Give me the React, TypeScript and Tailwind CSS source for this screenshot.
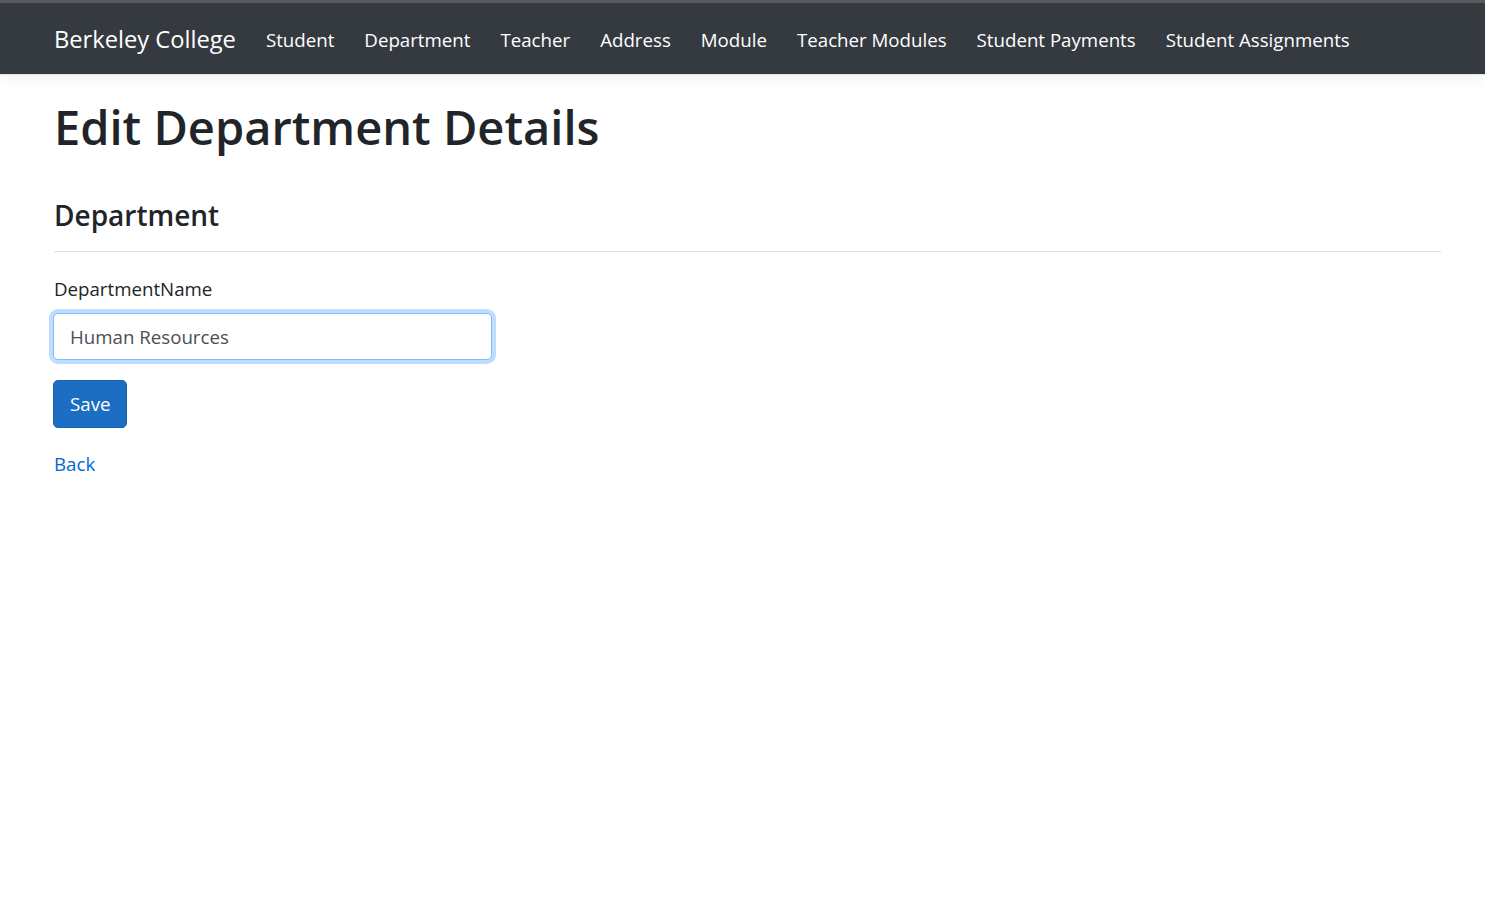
import { FC, useState } from 'react';

const navLinks = [
  'Student',
  'Department',
  'Teacher',
  'Address',
  'Module',
  'Teacher Modules',
  'Student Payments',
  'Student Assignments'
];

const App: FC = () => {
  const [name, setName] = useState('Human Resources');

  return (
    <div className="min-h-screen bg-white text-[#212529] font-['Open_Sans',sans-serif]">
      {/* Top strip + navbar */}
      <div className="h-[3px] bg-[#5b5b5b]" />
      <header className="h-[72px] bg-[#343a40] border-b border-[#e3e5e8] shadow-[0_4px_16px_rgba(0,0,0,0.05)]">
        <nav className="h-full flex items-center pl-[54px] pt-[5px]">
          <a href="#" className="text-[23.7px] text-white mr-[30px] leading-none pb-[2px]">Berkeley College</a>
          <ul className="flex items-center gap-[30px]">
            {navLinks.map((link) => (
              <li key={link}>
                <a href="#" className="text-[18.7px] text-white leading-none">{link}</a>
              </li>
            ))}
          </ul>
        </nav>
      </header>

      <main className="pl-[54px] pr-[44px]">
        <h1 className="text-[47px] font-semibold leading-[1.2] mt-[24px] mb-[44px]">Edit Department Details</h1>

        <h4 className="text-[28px] font-semibold leading-[1.2]">Department</h4>
        <hr className="mt-[18px] mb-[23px] border-t border-[#e0e0e0]" />

        {/* Form */}
        <div className="w-[439px] -ml-[1px]">
          <label className="block text-[18.7px] mb-[10px] leading-[1.5] ml-[1px]">DepartmentName</label>
          <input
            value={name}
            onChange={(e) => setName(e.target.value)}
            className="block w-full h-[47px] px-[16px] text-[18.7px] text-[#495057] bg-white border border-[#80bdff] rounded-[5px] outline-none shadow-[0_0_0_4px_rgba(0,123,255,0.25)]"
          />
        </div>

        <button className="-ml-[1px] mt-[20px] h-[48px] px-[16px] bg-[#1b6ec2] border border-[#1861ac] text-white text-[18.7px] rounded-[5px]">
          Save
        </button>

        <div className="mt-[22px]">
          <a href="#" className="text-[18.7px] text-[#0366d6]">Back</a>
        </div>
      </main>
    </div>
  );
};

export default App;
